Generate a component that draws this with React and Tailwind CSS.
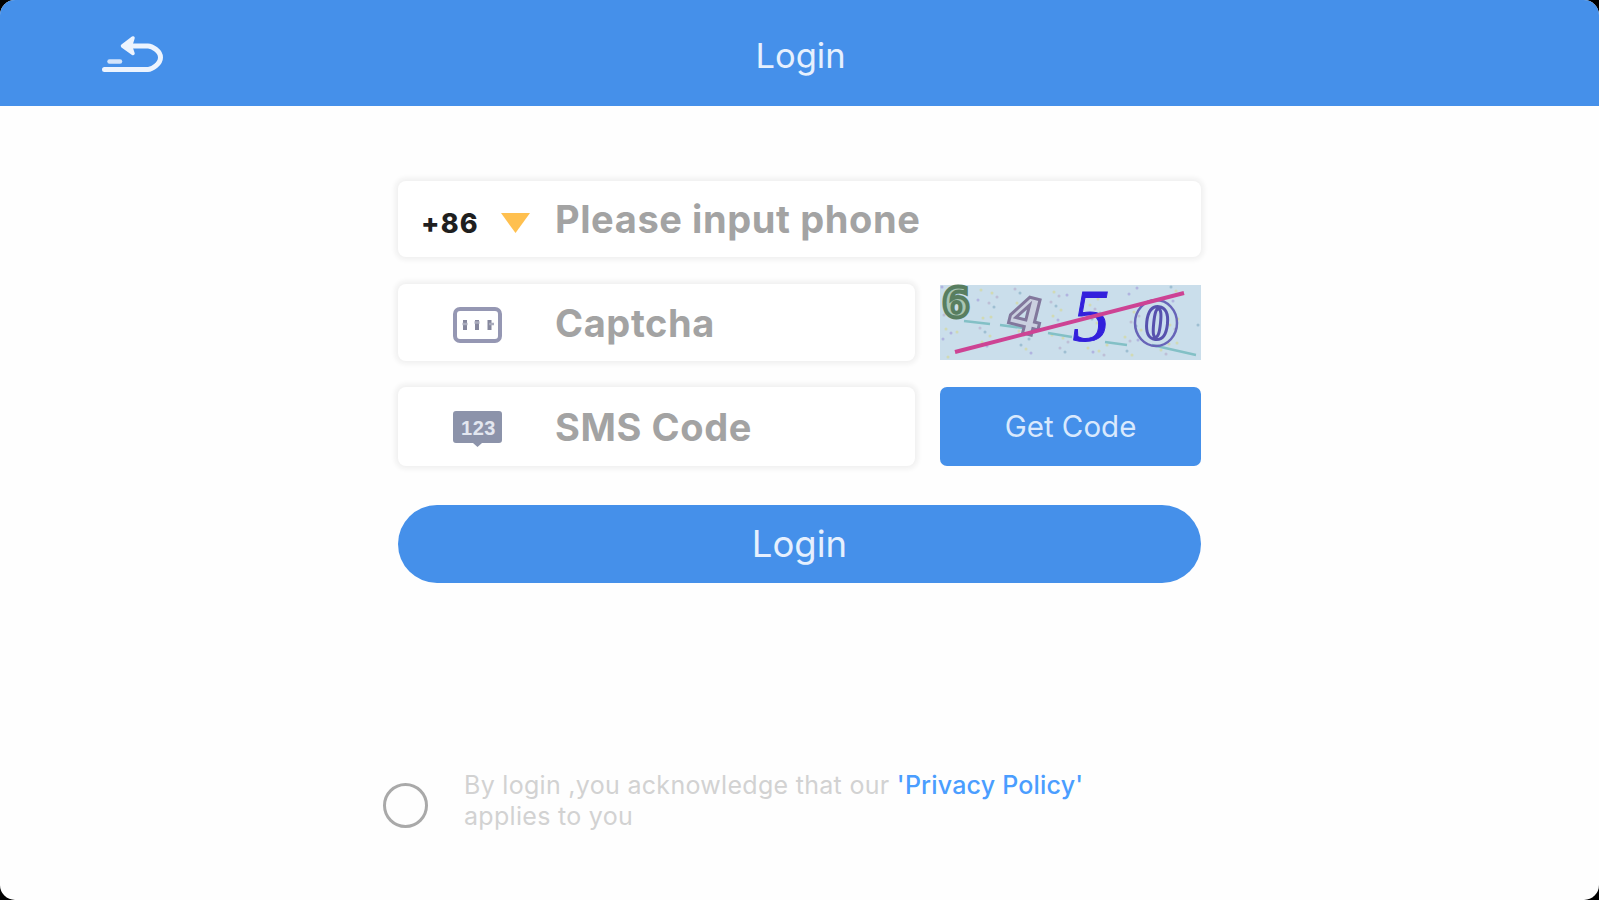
import * as React from "react";

function BackIcon() {
  return (
    <svg className="h-[40px] w-[65px]" viewBox="0 0 65 40" fill="none">
      <path d="M4.500 34.500H48C52 34.500 60.500 29 60.500 22.500C60.500 16 52 11 48 11H28" stroke="#edf4fe" strokeWidth="5" strokeLinecap="round" strokeLinejoin="round" />
      <path d="M33 3L22.500 11L33 18.500L30.500 11Z" fill="#edf4fe" stroke="#edf4fe" strokeWidth="3.500" strokeLinejoin="round" />
      <path d="M9.500 26.500H20" stroke="#d3e4fb" strokeWidth="4.500" strokeLinecap="round" />
    </svg>
  );
}

function CaptchaIcon() {
  return (
    <svg className="h-[36px] w-[50px]" viewBox="0 0 50 36" fill="none">
      <rect x="2" y="2" width="45" height="32" rx="5" stroke="#9597b3" strokeWidth="4" />
      <path d="M12 13V23M24 13V23M36.500 13V23" stroke="#85879d" strokeWidth="4" />
      <path d="M9.500 17H14.500M21.500 15.500H26.500M36 17H41" stroke="#a9abbc" strokeWidth="2.500" />
    </svg>
  );
}

function SmsIcon() {
  return (
    <svg className="h-[36px] w-[50px]" viewBox="0 0 50 36">
      <path d="M3 0H46Q49 0 49 3V29Q49 32 46 32H29L24.500 36L20 32H3Q0 32 0 29V3Q0 0 3 0Z" fill="#8c93aa" />
      <text x="25.500" y="23.500" textAnchor="middle" fontSize="20" fontWeight="600" letterSpacing="0.500" fill="#e3e7f0" fontFamily="Liberation Sans, sans-serif">
        123
      </text>
    </svg>
  );
}

const specks = ["#a8a6dc", "#d3d8a2", "#8fb4c9", "#b9b4cf", "#d3d8a2"];

function CaptchaImage() {
  return (
    <svg className="h-[75px] w-[261px] overflow-visible" viewBox="0 0 261 75">
      <rect width="261" height="75" fill="#cadeeb" />
      {Array.from({ length: 90 }, (_, i) => (
        <circle key={i} cx={2 + ((i * 97 + (i % 11) * 13) % 257)} cy={2 + ((i * 31 + (i % 5) * 17) % 71)} r="1.5" fill={specks[i % 5]} opacity="0.75" />
      ))}
      <path d="M24 36L50 39M60 40L98 45M108 48L132 52M165 57L187 60M212 60L256 70" stroke="#83c0c6" strokeWidth="2.500" fill="none" />
      <g textAnchor="middle">
        <text x="16" y="32" fontSize="40" fontWeight="700" fill="#a9c6b4" stroke="#587e60" strokeWidth="4" fontFamily="DejaVu Sans, sans-serif">6</text>
        <text x="86" y="48" fontSize="50" fontWeight="700" fill="#cbd0e0" stroke="#82779c" strokeWidth="3" fontFamily="DejaVu Sans, sans-serif" transform="rotate(14 85 30)">4</text>
        <text x="151" y="56" fontSize="74" fontStyle="italic" fill="#3320dc" stroke="#3320dc" strokeWidth="1" fontFamily="Liberation Serif, serif">5</text>
        <text x="217" y="54" fontSize="49" fontWeight="700" fill="#cadcf0" stroke="#5751ae" strokeWidth="3" fontFamily="Liberation Serif, serif" transform="rotate(6 217 38)">0</text>
      </g>
      <ellipse cx="216" cy="38" rx="21" ry="23" fill="none" stroke="#6764b8" strokeWidth="2.500" />
      <path d="M15 67L244 8" stroke="#cd4394" strokeWidth="4" />
    </svg>
  );
}

function Field({ icon, label, className }) {
  return (
    <div className={`flex items-center rounded-[8px] bg-white shadow-[0_0_5px_3px_#f0f0f0] ${className}`}>
      <div className="flex w-[157px] shrink-0 items-center">{icon}</div>
      <span className="whitespace-nowrap text-[38px] font-bold leading-none tracking-[0.6px] text-[#a3a3a3]">{label}</span>
    </div>
  );
}

export default function App() {
  return (
    <div className="h-[900px] w-[1599px] bg-black font-['Inter',sans-serif]">
      <div className="flex h-full flex-col overflow-hidden rounded-[15px] bg-[#fefefe]">
        {/* Top Bar */}
        <header className="grid h-[106px] shrink-0 grid-cols-3 items-center bg-[#4590ea]">
          <div className="pl-[100px] pt-[3px]">
            <BackIcon />
          </div>
          <h1 className="pl-[2px] pt-[6px] text-center text-[34.5px] leading-none text-[#e6f0fe]">Login</h1>
        </header>

        {/* Form */}
        <main className="mx-auto flex w-[803px] flex-col pt-[75px]">
          <Field
            className="h-[76px] w-full"
            label="Please input phone"
            icon={
              <div className="flex items-center pl-[23px] pt-[7px]">
                <span className="w-[79px] pt-[2px] text-[27px] font-extrabold leading-none tracking-[1.2px] text-[#1f1f1f]">+86</span>
                <svg className="h-[22px] w-[31px]" viewBox="0 0 31 22">
                  <path d="M1 1H30L15.500 21Z" fill="#ffc04f" />
                </svg>
              </div>
            }
          />
          <div className="mt-[27px] flex items-center justify-between">
            <Field className="h-[77px] w-[517px]" label="Captcha" icon={<div className="pl-[55px] pt-[4px]"><CaptchaIcon /></div>} />
            <CaptchaImage />
          </div>
          <div className="mt-[26px] flex items-center justify-between">
            <Field className="h-[79px] w-[517px]" label="SMS Code" icon={<div className="pl-[55px] pt-[4px]"><SmsIcon /></div>} />
            <button className="h-[79px] w-[261px] rounded-[7px] bg-[#4590ea] text-[29.5px] leading-none text-[#d9e9fd]">Get Code</button>
          </div>
          <button className="mt-[39px] h-[78px] w-full rounded-full bg-[#4590ea] text-[36.5px] leading-none text-[#e6f0fe]">Login</button>
        </main>

        {/* Agreement */}
        <div className="mt-[187px] flex items-start pl-[383px]">
          <span className="mt-[13px] h-[45px] w-[45px] rounded-full border-[3px] border-[#a9a9a9]"></span>
          <p className="ml-[36px] text-[25px] leading-[31px] tracking-[0.3px] text-[#d2d2d2]">
            By login ,you acknowledge that our <span className="font-medium tracking-[0.2px] text-[#4a9dff]">'Privacy Policy'</span>
            <br />
            applies to you
          </p>
        </div>
      </div>
    </div>
  );
}
